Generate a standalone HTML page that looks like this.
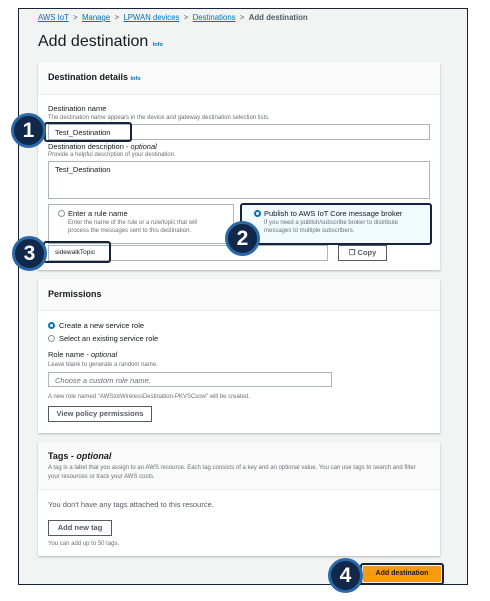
<!DOCTYPE html>
<html><head><meta charset="utf-8"><style>
*{box-sizing:border-box;margin:0;padding:0}
body{width:490px;height:601px;background:#fff;font-family:"Liberation Sans",sans-serif;position:relative;overflow:hidden;color:#16191f}
.abs{position:absolute}
#frame{left:18px;top:8px;width:450px;height:577px;border:1.5px solid #16233a;background:#f2f3f3}
.card{position:absolute;left:38px;width:402px;background:#fff;box-shadow:0 1px 2px rgba(0,0,0,.25)}
.hd{background:#fafafa;border-bottom:1px solid #eaeded}
.t{position:absolute;white-space:nowrap}
.lbl{font-size:7.5px;color:#16191f}
.help{font-size:6px;color:#687078}
.inp{position:absolute;border:1px solid #aab7b8;background:#fff;font-size:7.5px;padding:3px 0 0 6px}
.btn{position:absolute;border:1px solid #545b64;background:#fff;font-size:7.5px;font-weight:bold;color:#545b64;text-align:center}
.a{color:#0073bb;text-decoration:underline}
.info{font-size:5.5px;color:#0073bb;font-weight:bold}
.hl{position:absolute;border:2px solid #16233a;border-radius:3px}
.num{position:absolute;width:35px;height:35px;border-radius:50%;background:#10284a;border:3px solid #2b6aa8;color:#fff;font-weight:bold;font-size:21px;text-align:center;line-height:29px}
.rad{position:absolute;width:7px;height:7px;border-radius:50%;border:1px solid #879596;background:#fff}
.rad.on{border:2px solid #0073bb}
</style></head><body>
<div id="frame" class="abs"></div>
<div class="t" style="left:38px;top:13px;font-size:7.8px;color:#545b64"><span class="a">AWS IoT</span> &nbsp;&gt;&nbsp; <span class="a">Manage</span> &nbsp;&gt;&nbsp; <span class="a">LPWAN devices</span> &nbsp;&gt;&nbsp; <span class="a">Destinations</span> &nbsp;&gt;&nbsp; <b style="color:#545b64">Add destination</b></div>
<div class="t" style="left:38px;top:33px;font-size:16px;color:#16191f">Add destination <span class="info">Info</span></div>

<div class="card" style="top:62px;height:208px">
  <div class="hd" style="height:33px"></div>
  <div class="t" style="left:10px;top:10px;font-size:9px;font-weight:bold">Destination details <span class="info">Info</span></div>
  <div class="t lbl" style="left:10px;top:42px">Destination name</div>
  <div class="t help" style="left:10px;top:53px">The destination name appears in the device and gateway destination selection lists.</div>
  <div class="inp" style="left:10px;top:62px;width:382px;height:16px">Test_Destination</div>
  <div class="t lbl" style="left:10px;top:80px">Destination description - <i>optional</i></div>
  <div class="t help" style="left:10px;top:90px">Provide a helpful description of your destination.</div>
  <div class="inp" style="left:10px;top:99px;width:382px;height:38px">Test_Destination</div>
  <div class="abs" style="left:10px;top:142px;width:186px;height:40px;border:1px solid #aab7b8"></div>
  <div class="rad" style="left:20px;top:148px"></div>
  <div class="t lbl" style="left:30px;top:147px">Enter a rule name</div>
  <div class="t help" style="left:30px;top:157px;line-height:8px">Enter the name of the rule or a rule/topic that will<br>process the messages sent to this destination.</div>
  <div class="abs" style="left:202px;top:141px;width:192px;height:42px;background:#f1faff;border:2px solid #16233a;border-radius:3px"></div>
  <div class="rad on" style="left:216px;top:148px"></div>
  <div class="t lbl" style="left:226px;top:147px">Publish to AWS IoT Core message broker</div>
  <div class="t help" style="left:226px;top:157px;line-height:8px">If you need a publish/subscribe broker to distribute<br>messages to multiple subscribers.</div>
  <div class="inp" style="left:10px;top:183px;width:280px;height:16px;font-size:6.5px">sidewalkTopic</div>
  <div class="btn" style="left:300px;top:183px;width:49px;height:16px;line-height:14px">&#10064; Copy</div>
</div>

<div class="card" style="top:279px;height:154px">
  <div class="hd" style="height:32px"></div>
  <div class="t" style="left:10px;top:10px;font-size:9px;font-weight:bold">Permissions</div>
  <div class="rad on" style="left:10px;top:43px"></div>
  <div class="t lbl" style="left:21px;top:42px">Create a new service role</div>
  <div class="rad" style="left:10px;top:56px"></div>
  <div class="t lbl" style="left:21px;top:55px">Select an existing service role</div>
  <div class="t lbl" style="left:10px;top:71px">Role name - <i>optional</i></div>
  <div class="t help" style="left:10px;top:83px">Leave blank to generate a random name.</div>
  <div class="inp" style="left:10px;top:93px;width:284px;height:15px;font-style:italic;color:#687078">Choose a custom role name.</div>
  <div class="t help" style="left:10px;top:115px">A new role named "AWSIotWirelessDestination-PKVSCsow" will be created.</div>
  <div class="btn" style="left:10px;top:127px;width:104px;height:16px;line-height:14px">View policy permissions</div>
</div>

<div class="card" style="top:442px;height:114px">
  <div class="hd" style="height:48px"></div>
  <div class="t" style="left:10px;top:9px;font-size:9px;font-weight:bold">Tags - <i>optional</i></div>
  <div class="t help" style="left:10px;top:22px;line-height:9px">A tag is a label that you assign to an AWS resource. Each tag consists of a key and an optional value. You can use tags to search and filter<br>your resources or track your AWS costs.</div>
  <div class="t lbl" style="left:10px;top:58px;color:#545b64">You don't have any tags attached to this resource.</div>
  <div class="btn" style="left:10px;top:78px;width:64px;height:16px;line-height:14px">Add new tag</div>
  <div class="t help" style="left:10px;top:99px">You can add up to 50 tags.</div>
</div>

<div class="abs" style="left:360px;top:563px;width:84px;height:22px;border:2px solid #16233a;border-radius:3px"></div>
<div class="abs" style="left:363px;top:566px;width:78px;height:16px;background:#f89a0f;font-size:7px;font-weight:bold;color:#16191f;text-align:center;line-height:16px">Add destination</div>

<div class="hl" style="left:44px;top:122px;width:88px;height:20px"></div>
<div class="hl" style="left:43px;top:241px;width:68px;height:22px"></div>
<div class="num" style="left:11px;top:113px">1</div>
<div class="num" style="left:225px;top:221px">2</div>
<div class="num" style="left:12px;top:236px">3</div>
<div class="num" style="left:328px;top:558px">4</div>
</body></html>
